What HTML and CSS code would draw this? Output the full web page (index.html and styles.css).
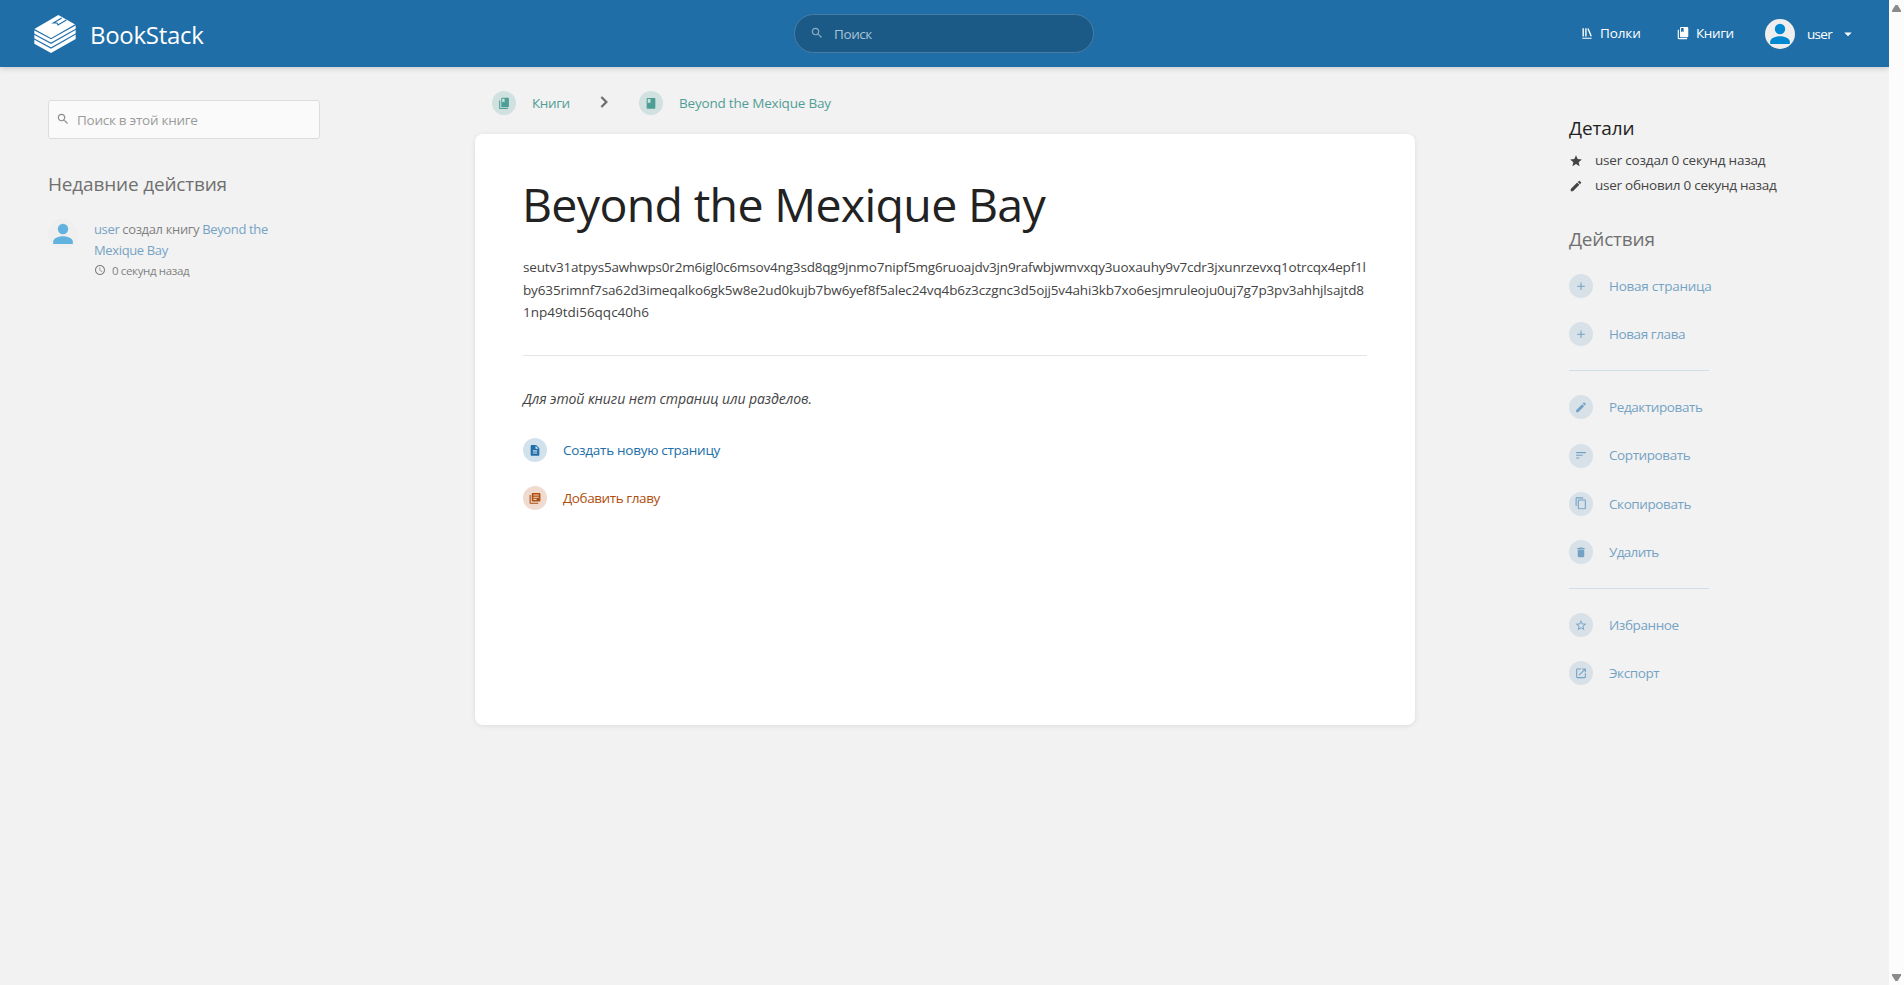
FILE: index.html
```html
<!DOCTYPE html>
<html lang="ru">
<head>
<meta charset="utf-8">
<title>Beyond the Mexique Bay | BookStack</title>
<link rel="stylesheet" href="styles.css">
</head>
<body>
<svg class="defs" aria-hidden="true">
  <symbol id="search" viewBox="0 0 24 24"><path d="M15.5 14h-.79l-.28-.27C15.41 12.59 16 11.11 16 9.5 16 5.91 13.09 3 9.5 3S3 5.91 3 9.5 5.91 16 9.5 16c1.61 0 3.09-.59 4.23-1.57l.27.28v.79l5 4.99L20.49 19l-4.99-5zm-6 0C7.01 14 5 11.99 5 9.5S7.01 5 9.5 5 14 7.01 14 9.5 11.99 14 9.5 14z"/></symbol>
  <symbol id="shelves" viewBox="0 0 24 24"><path d="M4 20.058h15.892V22H4zM6.658 3.643V18h-2.38V3.643zM11.326 3.643V18H8.947V3.643zM14.722 3.856l5.613 13.214-2.19.93-5.613-13.214z"/></symbol>
  <symbol id="books" viewBox="0 0 24 24"><path d="M19.252 1.708H8.663a1.77 1.77 0 0 0-1.765 1.764v14.12c0 .97.794 1.764 1.765 1.764h10.59c.97 0 1.764-.794 1.764-1.764V3.472c0-.97-.794-1.764-1.765-1.764zM8.663 3.472h4.412v7.06l-2.206-1.324-2.206 1.323z"/><path d="M2.966 6.61v14c0 1.1.9 2 2 2h14v-2h-14v-14z"/></symbol>
  <symbol id="book" viewBox="0 0 24 24"><path d="M18 2H6c-1.1 0-2 .9-2 2v16c0 1.1.9 2 2 2h12c1.1 0 2-.9 2-2V4c0-1.1-.9-2-2-2zM6 4h5v8l-2.5-1.5L6 12V4z"/></symbol>
  <symbol id="chapter" viewBox="0 0 24 24"><path d="M4 6H2v14c0 1.1.9 2 2 2h14v-2H4V6zm16-4H8c-1.1 0-2 .9-2 2v12c0 1.1.9 2 2 2h12c1.1 0 2-.9 2-2V4c0-1.1-.9-2-2-2zm-1 9H9V9h10v2zm-4 4H9v-2h6v2zm4-8H9V5h10v2z"/></symbol>
  <symbol id="page" viewBox="0 0 24 24"><path d="M14 2H6c-1.1 0-1.99.9-1.99 2L4 20c0 1.1.89 2 1.99 2H18c1.1 0 2-.9 2-2V8l-6-6zm2 16H8v-2h8v2zm0-4H8v-2h8v2zm-3-5V3.5L18.5 9H13z"/></symbol>
  <symbol id="person" viewBox="0 0 30 30"><circle cx="15" cy="15" r="15" fill="#eee"/><circle cx="15" cy="10" r="5.2" fill="#0288d1"/><path fill="#0288d1" d="M5.2 25v-2.4C5.2 19 11.5 17.300 15 17.300s9.800 1.700 9.800 5.300V25z"/></symbol>
  <symbol id="caret" viewBox="0 0 24 24"><path d="M7 10l5 5 5-5z"/></symbol>
  <symbol id="chevron" viewBox="0 0 24 24"><path d="M10 6L8.590 7.410 13.170 12l-4.580 4.590L10 18l6-6z"/></symbol>
  <symbol id="clock" viewBox="0 0 24 24"><path d="M11.990 2C6.470 2 2 6.480 2 12s4.470 10 9.990 10C17.520 22 22 17.520 22 12S17.520 2 11.990 2zM12 20c-4.420 0-8-3.580-8-8s3.580-8 8-8 8 3.580 8 8-3.580 8-8 8zm.5-13H11v6l5.250 3.150.75-1.230-4.500-2.670z"/></symbol>
  <symbol id="star" viewBox="0 0 24 24"><path d="M12 17.270L18.180 21l-1.640-7.030L22 9.240l-7.190-.61L12 2 9.190 8.630 2 9.240l5.460 4.730L5.820 21z"/></symbol>
  <symbol id="star-outline" viewBox="0 0 24 24"><path d="M22 9.240l-7.190-.62L12 2 9.190 8.630 2 9.240l5.460 4.730L5.820 21 12 17.270 18.180 21l-1.630-7.030L22 9.240zM12 15.400l-3.760 2.270 1-4.280-3.320-2.880 4.380-.38L12 6.100l1.710 4.040 4.380.38-3.320 2.880 1 4.280L12 15.400z"/></symbol>
  <symbol id="edit" viewBox="0 0 24 24"><path d="M3 17.250V21h3.750L17.810 9.940l-3.750-3.750L3 17.250zM20.710 7.040a.996.996 0 0 0 0-1.410l-2.340-2.340a.996.996 0 0 0-1.410 0l-1.830 1.830 3.750 3.750 1.830-1.830z"/></symbol>
  <symbol id="add" viewBox="0 0 24 24"><path d="M19 13h-6v6h-2v-6H5v-2h6V5h2v6h6v2z"/></symbol>
  <symbol id="sort" viewBox="0 0 24 24"><path d="M3 18h6v-2H3v2zM3 6v2h18V6H3zm0 7h12v-2H3v2z"/></symbol>
  <symbol id="copy" viewBox="0 0 24 24"><path d="M16 1H4c-1.100 0-2 .9-2 2v14h2V3h12V1zm3 4H8c-1.100 0-2 .9-2 2v14c0 1.100.9 2 2 2h11c1.100 0 2-.9 2-2V7c0-1.100-.9-2-2-2zm0 16H8V7h11v14z"/></symbol>
  <symbol id="delete" viewBox="0 0 24 24"><path d="M6 19c0 1.100.9 2 2 2h8c1.100 0 2-.9 2-2V7H6v12zM19 4h-3.500l-1-1h-5l-1 1H5v2h14V4z"/></symbol>
  <symbol id="export" viewBox="0 0 24 24"><path d="M19 19H5V5h7V3H5a2 2 0 0 0-2 2v14a2 2 0 0 0 2 2h14c1.100 0 2-.9 2-2v-7h-2v7zM14 3v2h3.590l-9.830 9.830 1.410 1.410L19 6.410V10h2V3h-7z"/></symbol>
</svg>

<div class="window">
  <div class="page">
    <header class="header">
      <a class="logo">
        <svg class="logo-mark" viewBox="12 12 126 114">
          <path fill="#fff" d="M85 12l52 29v43l-74 42-50-28V54z"/>
          <path class="logo-line" d="M11 55l52 28 76-43M11 69l52 28 76-43M11 83l52 28 76-43M95 21L70 36l11 0 3 6 25-15"/>
        </svg>
        <span class="logo-text">BookStack</span>
      </a>
      <div class="top-search"><svg class="icon"><use href="#search"/></svg><span class="k4">Поиск</span></div>
      <nav class="links">
        <a class="link-shelves"><svg class="icon"><use href="#shelves"/></svg><span class="k1">Полки</span></a>
        <a class="link-books"><svg class="icon"><use href="#books"/></svg><span class="k4">Книги</span></a>
        <a class="link-user"><svg class="avatar"><use href="#person"/></svg><span class="k6">user</span><svg class="icon caret"><use href="#caret"/></svg></a>
      </nav>
    </header>

    <div class="columns">
      <aside class="left">
        <div class="book-search"><svg class="icon"><use href="#search"/></svg><span class="k3">Поиск в этой книге</span></div>
        <h5 class="title k1 faded">Недавние действия</h5>
        <div class="activity">
          <svg class="avatar"><use href="#person"/></svg>
          <div class="activity-text">
            <div><a>user</a> создал книгу <a>Beyond the<br>Mexique Bay</a></div>
            <div class="when"><svg class="icon"><use href="#clock"/></svg><span>0 секунд назад</span></div>
          </div>
        </div>
      </aside>

      <main class="center">
        <nav class="crumbs">
          <a class="row"><i class="chip"><svg class="icon"><use href="#books"/></svg></i><span class="k4">Книги</span></a>
          <svg class="chevron"><use href="#chevron"/></svg>
          <a class="row"><i class="chip"><svg class="icon"><use href="#book"/></svg></i><span class="k2">Beyond the Mexique Bay</span></a>
        </nav>
        <section class="card">
          <h1>Beyond the Mexique Bay</h1>
          <p class="desc"><span class="line-a">seutv31atpys5awhwps0r2m6igl0c6msov4ng3sd8qg9jnmo7nipf5mg6ruoajdv3jn9rafwbjwmvxqy3uoxauhy9v7cdr3jxunrzevxq1otrcqx4epf1l</span><br><span class="line-b">by635rimnf7sa62d3imeqalko6gk5w8e2ud0kujb7bw6yef8f5alec24vq4b6z3czgnc3d5ojj5v4ahi3kb7xo6esjmruleoju0uj7g7p3pv3ahhjlsajtd8</span><br>1np49tdi56qqc40h6</p>
          <hr>
          <p class="empty">Для этой книги нет страниц или разделов.</p>
          <a class="row new-page"><i class="chip"><svg class="icon"><use href="#page"/></svg></i><span class="k3">Создать новую страницу</span></a>
          <a class="row new-chapter"><i class="chip"><svg class="icon"><use href="#chapter"/></svg></i><span class="k4">Добавить главу</span></a>
        </section>
      </main>

      <aside class="right">
        <h5 class="title k1">Детали</h5>
        <div class="meta"><svg class="icon"><use href="#star"/></svg><span class="k2">user создал 0 секунд назад</span></div>
        <div class="meta"><svg class="icon"><use href="#edit"/></svg><span class="k25">user обновил 0 секунд назад</span></div>
        <h5 class="title k2 faded actions-title">Действия</h5>
        <div class="actions">
          <a class="row"><i class="chip"><svg class="icon"><use href="#add"/></svg></i><span class="k25">Новая страница</span></a>
          <a class="row"><i class="chip"><svg class="icon"><use href="#add"/></svg></i><span class="k4">Новая глава</span></a>
          <hr>
          <a class="row"><i class="chip"><svg class="icon"><use href="#edit"/></svg></i><span class="k4">Редактировать</span></a>
          <a class="row"><i class="chip"><svg class="icon"><use href="#sort"/></svg></i><span class="k4">Сортировать</span></a>
          <a class="row"><i class="chip"><svg class="icon"><use href="#copy"/></svg></i><span class="k4">Скопировать</span></a>
          <a class="row"><i class="chip"><svg class="icon"><use href="#delete"/></svg></i><span class="k6">Удалить</span></a>
          <hr>
          <a class="row"><i class="chip"><svg class="icon"><use href="#star-outline"/></svg></i><span class="k4">Избранное</span></a>
          <a class="row"><i class="chip"><svg class="icon"><use href="#export"/></svg></i><span class="k4">Экспорт</span></a>
        </div>
      </aside>
    </div>
  </div>
  <div class="scrollbar"><i class="arrow up"></i><i class="arrow down"></i></div>
</div>
</body>
</html>
```
FILE: styles.css
```css
* { box-sizing: border-box; }
body {
  margin: 0;
  background: #f2f2f2;
  color: #444;
  font: 13.5px/22.5px "Open Sans", "Noto Sans", sans-serif;
  overflow: hidden;
}
h1, h5, p { margin: 0; font-weight: 400; }
hr { border: 0; height: 1px; margin: 0; }
svg { flex: none; display: block; }
.defs { position: absolute; width: 0; height: 0; }
.icon { width: 14px; height: 14px; fill: currentColor; }
.avatar { width: 30px; height: 30px; }
span { white-space: nowrap; }

/* tracking steps */
.k1 { letter-spacing: -.12px; }
.k2 { letter-spacing: -.2px; }
.k25 { letter-spacing: -.25px; }
.k3 { letter-spacing: -.27px; }
.k4 { letter-spacing: -.41px; }
.k6 { letter-spacing: -.67px; }

.window { display: flex; height: 985px; }
.page { flex: 1; }
.scrollbar {
  width: 15px;
  background: #fcfcfc;
  display: flex;
  flex-direction: column;
  justify-content: space-between;
  align-items: center;
  padding: 5px 0 4px;
}
.arrow { width: 9px; height: 7px; background: #8b8b8b; }
.up { clip-path: polygon(38% 0, 62% 0, 100% 80%, 100% 100%, 0 100%, 0 80%); }
.down { clip-path: polygon(0 0, 100% 0, 100% 20%, 62% 100%, 38% 100%, 0 20%); }

.header {
  height: 67px;
  background: #206ea7;
  color: #fff;
  box-shadow: 0 1px 6px rgba(0, 0, 0, .2);
  display: grid;
  grid-template-columns: 794px 300px 1fr;
  align-items: center;
}
.logo { display: flex; align-items: center; padding-left: 34px; }
.logo-mark { width: 42px; height: 38px; }
.logo-line { fill: none; stroke: #206ea7; stroke-width: 3.4; }
.logo-text { font-size: 24px; letter-spacing: -.3px; line-height: 30px; padding: 2px 0 0 14px; }
.top-search {
  height: 39px;
  border: 1px solid #4a7da3;
  border-radius: 20px;
  background: #1b5a86;
  color: #a9c3d6;
  display: flex;
  align-items: center;
  padding-left: 15px;
  gap: 10px;
}
.top-search .icon { opacity: .8; margin-top: -1px; }
.top-search span { padding-top: 1px; }
.links { display: flex; align-items: center; padding-left: 486px; }
.links a { display: flex; align-items: center; }
.link-shelves { width: 96px; gap: 6px; }
.link-books { width: 89px; gap: 6px; }
.link-user .k6 { padding: 1px 0 0 12px; width: 50px; }
.links .caret { width: 18px; height: 18px; margin-left: -6px; }
.link-shelves, .link-books { margin-top: -1px; }

.columns { display: grid; grid-template-columns: 475px 940px 1fr; }
.left { padding: 33px 155px 0 48px; }
.book-search {
  height: 39px;
  border: 1px solid #ddd;
  border-radius: 3px;
  background: #fafafa;
  color: #9b9b9b;
  display: flex;
  align-items: center;
  padding-left: 7px;
  gap: 7px;
}
.book-search span { padding-top: 1px; }
.book-search .icon { margin-top: -2px; color: #8c8c8c; }
.title { font-size: 19px; line-height: 26px; color: #222; }
.title.faded { color: #707070; }
.left .title { margin-top: 32px; letter-spacing: -.18px; }
.activity { display: flex; gap: 16px; margin-top: 20px; opacity: .6; }
.activity .avatar { margin-top: 2px; }
.activity-text { font-size: 13px; line-height: 21px; letter-spacing: -.36px; color: #333; padding-top: 2px; }
.activity a { color: #206ea7; }
.when { display: flex; align-items: center; gap: 6px; font-size: 11.5px; height: 19px; }
.when .icon { width: 12px; height: 12px; margin-top: -2px; }

.row { display: flex; align-items: center; gap: 16px; }
.chip {
  flex: none;
  width: 24px;
  height: 24px;
  border-radius: 50%;
  background: color-mix(in srgb, currentColor 20%, transparent);
  display: grid;
  place-items: center;
}
.chip .icon { width: 13px; height: 13px; transform: translate(-.5px, -.2px); }

.crumbs { height: 67px; display: flex; align-items: center; padding: 5px 0 0 17px; color: #077b70; opacity: .7; }
.crumbs .k4 { width: 36px; }
.chevron { width: 22px; height: 22px; fill: #333; stroke: #333; stroke-width: .5; margin: -2px 24px 0 25px; }
.card {
  height: 591px;
  border-radius: 8px;
  background: #fff;
  box-shadow: 0 1px 6px -1px rgba(0, 0, 0, .12);
  padding: 42px 48px 0;
}
.card h1 { font-size: 46.5px; line-height: 56px; letter-spacing: -.68px; color: #222; margin-left: -1px; }
.desc { margin: 24px 0 31px; }
.line-a { letter-spacing: -.18px; }
.line-b { letter-spacing: -.135px; }
.card hr { background: #e5e5e5; }
.empty { font-size: 14px; font-style: italic; letter-spacing: -.07px; margin: 32px 0 28px; }
.new-page { color: #206ea7; margin-bottom: 24px; }
.new-chapter { color: #af4d0d; }

.right { padding: 48px 0 0 154px; }
.right .title { margin-bottom: 7px; }
.meta { display: flex; align-items: center; gap: 12px; height: 25px; }
.right .actions-title { margin: 28px 0 10px; }
.actions { width: 140px; color: #206ea7; opacity: .6; }
.actions .row { height: 48.2px; }
.actions hr { background: #206ea7; opacity: .25; margin: 12px 0; }
```
